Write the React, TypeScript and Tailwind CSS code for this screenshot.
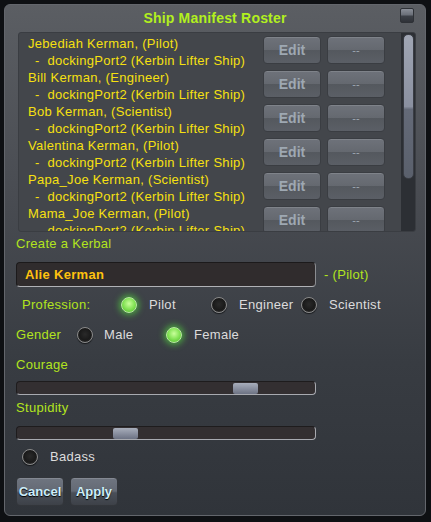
import React from "react";

const crew = [
  ["Jebediah Kerman, (Pilot)"],
  ["Bill Kerman, (Engineer)"],
  ["Bob Kerman, (Scientist)"],
  ["Valentina Kerman, (Pilot)"],
  ["Papa_Joe Kerman, (Scientist)"],
  ["Mama_Joe Kerman, (Pilot)"],
];

const font = { fontFamily: '"Liberation Sans", Arial, sans-serif' };

function Radio({ on }: { on: boolean }) {
  return on ? (
    <div className="w-[16px] h-[16px] rounded-full shrink-0 border border-[#b8f0a0] bg-[radial-gradient(circle_at_50%_40%,#c8ff9a_0%,#7ee050_55%,#4fb030_100%)] shadow-[0_0_6px_2px_rgba(90,255,60,0.55)]" />
  ) : (
    <div className="w-[16px] h-[16px] rounded-full shrink-0 border border-[#8a8a8a] bg-[radial-gradient(circle_at_50%_45%,#2a2a2a_0%,#1a1a1a_55%,#3c3c3c_100%)] shadow-[0_1px_1px_rgba(0,0,0,0.6)]" />
  );
}

function GrayBtn({ children }: { children: React.ReactNode }) {
  return (
    <div className="w-[58px] h-[28px] rounded-[4px] border border-[#3a3d42] bg-[linear-gradient(to_bottom,#6e727a_0%,#656970_48%,#54585e_52%,#5b5f66_100%)] shadow-[inset_0_1px_0_rgba(255,255,255,0.12)] flex items-center justify-center text-[14px] font-bold text-[#9ea8b2]">
      {children}
    </div>
  );
}

function Slider({ pos }: { pos: number }) {
  return (
    <div className="relative w-[300px] h-[14px] rounded-[4px] bg-[#332f31] border-t border-l border-[#1e1c1d] border-b border-r border-b-[#a8aab0] border-r-[#a8aab0]">
      <div
        className="absolute top-[1px] w-[25px] h-[11px] rounded-[2px] bg-[linear-gradient(to_bottom,#a8aebb_0%,#8a90a0_50%,#6c7283_100%)]"
        style={{ left: pos }}
      />
    </div>
  );
}

function AppBtn({ children }: { children: React.ReactNode }) {
  return (
    <div className="w-[48px] h-[29px] rounded-[4px] border border-[#33363b] bg-[linear-gradient(to_bottom,#6f7580_0%,#646a75_48%,#4a4f58_55%,#3d4148_100%)] shadow-[inset_0_1px_0_rgba(255,255,255,0.15)] flex items-center justify-center text-[13px] font-bold text-[#cdeefa] [text-shadow:0_1px_1px_#000]">
      {children}
    </div>
  );
}

export default function App() {
  return (
    <div className="w-[431px] h-[522px] bg-[#0e1013] pt-[4px] pl-[4px] overflow-hidden" style={font}>
      <div className="w-[422px] h-[512px] rounded-[6px] border border-[#63666c] bg-[linear-gradient(to_bottom,#5b5e63_0%,#4a4d53_35%,#383c42_70%,#30343a_100%)] flex flex-col relative">
        {/* title */}
        <div className="h-[27px] flex items-center justify-center text-[14px] font-bold text-[#b2f01e] tracking-[0.2px]">
          Ship Manifest Roster
        </div>
        <div className="absolute right-[11px] top-[3px] w-[14px] h-[15px] rounded-[2px] border border-[#2e3136] bg-[linear-gradient(to_bottom,#8a8f98_0%,#6a6f78_45%,#3c4047_55%,#2f3238_100%)]" />

        {/* list */}
        <div className="ml-[13px] w-[398px] h-[200px] rounded-[3px] bg-[#43464b] border border-[#3a3d42] flex overflow-hidden">
          <div className="flex-1 pt-[2px] pl-[9px] overflow-hidden">
            {crew.map(([name]) => (
              <div key={name} className="h-[34px] flex items-start">
                <div className="w-[235px] text-[13px] leading-[17px] text-[#f6e010] whitespace-nowrap tracking-[0.3px]">
                  <div>{name}</div>
                  <div className="pl-[7px]">-&nbsp;&nbsp;dockingPort2 (Kerbin Lifter Ship)</div>
                </div>
                <div className="flex gap-[6px] mt-[1px]">
                  <GrayBtn>Edit</GrayBtn>
                  <GrayBtn>
                    <span className="text-[11px] font-normal">--</span>
                  </GrayBtn>
                </div>
              </div>
            ))}
          </div>
          <div className="w-[14px] h-full bg-[#2c2f34] pt-[1px] pl-[2px]">
            <div className="w-[11px] h-[145px] rounded-[5px] bg-[linear-gradient(to_bottom,#a0a6b4_0%,#8a90a0_50%,#646a78_52%,#5a606c_100%)] border border-[#3a3d44]" />
          </div>
        </div>

        {/* create */}
        <div className="px-[11px] flex flex-col tracking-[0.3px]">
          <div className="mt-[4px] h-[16px] leading-[16px] text-[13px] text-[#b2e41e]">Create a Kerbal</div>
          <div className="mt-[10px] flex items-center">
            <div className="w-[300px] h-[25px] rounded-[4px] bg-[#302c2d] border border-[#1c1a1b] border-b-[#b0b2b6] border-r-[#8a8c90] flex items-center pl-[8px] text-[13px] font-bold text-[#ffc20e]">
              Alie Kerman
            </div>
            <div className="ml-[8px] text-[13px] text-[#b2e41e]">- (Pilot)</div>
          </div>

          <div className="mt-[8px] h-[20px] flex items-center text-[13px]">
            <div className="w-[105px] pl-[6px] text-[#b2e41e]">Profession:</div>
            <div className="w-[90px] flex items-center gap-[12px]">
              <Radio on />
              <span className="text-[#dcdcdc]">Pilot</span>
            </div>
            <div className="w-[90px] flex items-center gap-[12px]">
              <Radio on={false} />
              <span className="text-[#dcdcdc]">Engineer</span>
            </div>
            <div className="flex items-center gap-[12px]">
              <Radio on={false} />
              <span className="text-[#dcdcdc]">Scientist</span>
            </div>
          </div>

          <div className="mt-[10px] h-[20px] flex items-center text-[13px]">
            <div className="w-[61px] text-[#b2e41e]">Gender</div>
            <div className="w-[89px] flex items-center gap-[11px]">
              <Radio on={false} />
              <span className="text-[#dcdcdc]">Male</span>
            </div>
            <div className="flex items-center gap-[12px]">
              <Radio on />
              <span className="text-[#dcdcdc]">Female</span>
            </div>
          </div>

          <div className="mt-[12px] h-[16px] leading-[16px] text-[13px] text-[#b2e41e]">Courage</div>
          <div className="mt-[8px]">
            <Slider pos={216} />
          </div>
          <div className="mt-[5px] h-[16px] leading-[16px] text-[13px] text-[#b2e41e]">Stupidity</div>
          <div className="mt-[10px]">
            <Slider pos={96} />
          </div>

          <div className="mt-[7px] h-[20px] flex items-center text-[13px] pl-[6px] gap-[12px]">
            <Radio on={false} />
            <span className="text-[#dcdcdc]">Badass</span>
          </div>

          <div className="mt-[10px] flex gap-[6px] tracking-normal">
            <AppBtn>Cancel</AppBtn>
            <AppBtn>Apply</AppBtn>
          </div>
        </div>
      </div>
    </div>
  );
}
